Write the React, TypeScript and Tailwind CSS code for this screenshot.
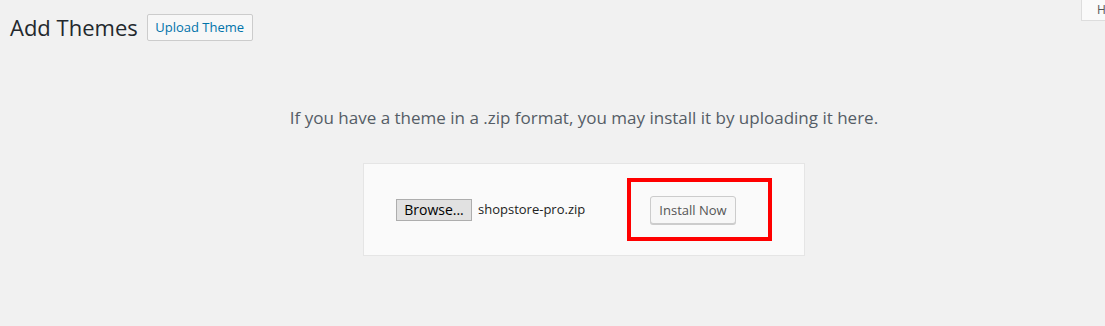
export default function App() {
  return (
    <div className="w-[1105px] h-[326px] overflow-hidden bg-[#f1f1f1] text-[#23282d] font-['Open_Sans',sans-serif]">
      <div className="flex items-start justify-between">
        {/* page heading */}
        <div className="flex items-center pl-[10px] pt-[14px]">
          <h1 className="text-[22px] leading-[27px] font-normal">Add Themes</h1>
          <button className="ml-[9px] h-[27px] w-[106px] rounded-[2px] border border-[#ccc] bg-[#f7f7f7] text-[13px] leading-[25px] text-[#0073aa]">
            Upload Theme
          </button>
        </div>
        {/* help tab, cut off by the window edge */}
        <div className="w-[24px] h-[21px] border-l border-b border-[#ddd] bg-[#fafafa] pl-[15px] text-[12px] leading-[20px] text-[#555]">
          H
        </div>
      </div>

      <div className="flex flex-col items-center pl-[63px] pt-[66px]">
        <p className="text-[17px] leading-[22px] text-[#555d66]">
          If you have a theme in a .zip format, you may install it by uploading it here.
        </p>
        <form className="mt-[34px] w-[442px] h-[93px] flex items-center border border-[#e5e5e5] bg-[#fafafa] pl-[32px]">
          <button type="button" className="h-[22px] w-[76px] border border-[#adadad] bg-[#e1e1e1] text-[14px] leading-[20px] text-black">
            Browse...
          </button>
          <span className="ml-[6px] text-[13px] text-[#222]">shopstore-pro.zip</span>
          <div className="ml-auto mr-[32px] flex items-center w-[145px] h-[63px] border-[4px] border-[#ff0000] pl-[19px]">
            <button type="button" className="h-[28px] w-[86px] rounded-[3px] border border-[#ccc] bg-[#f7f7f7] shadow-[0_1px_0_#ccc] text-[13px] leading-[26px] text-[#555]">
              Install Now
            </button>
          </div>
        </form>
      </div>
    </div>
  );
}
